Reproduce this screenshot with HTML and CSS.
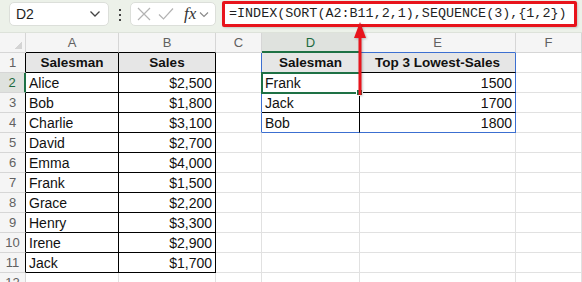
FILE: index.html
```html
<!DOCTYPE html>
<html lang="en">
<head>
  <meta charset="UTF-8" />
  <title>SORT with SEQUENCE</title>
  <link rel="stylesheet" href="styles.css">
</head>
<body>
  <div class="toolbar">
    <div class="namebox">
      <span>D2</span>
      <svg width="12" height="8" viewBox="0 0 12 8"><path d="M1.5 1.5 L6 6 L10.5 1.5" fill="none" stroke="#444" stroke-width="1.3"/></svg>
    </div>
    <div class="dots"><i></i><i></i><i></i></div>
    <div class="fxbox">
      <svg width="14" height="14" viewBox="0 0 14 14"><path d="M1 1 L13 13 M13 1 L1 13" stroke="#b3b3b3" stroke-width="1.2"/></svg>
      <svg width="16" height="14" viewBox="0 0 16 14"><path d="M1 7.5 L5.5 12 L15 1.5" fill="none" stroke="#b3b3b3" stroke-width="1.2"/></svg>
      <span class="fx">fx</span>
      <svg width="10" height="7" viewBox="0 0 10 7"><path d="M1 1.5 L5 5.5 L9 1.5" fill="none" stroke="#888" stroke-width="1.1"/></svg>
    </div>
    <div class="formula">=INDEX(SORT(A2:B11,2,1),SEQUENCE(3),{1,2})</div>
  </div>

  <div class="sheet">
    <!-- column headers -->
    <div class="c hd corner"></div>
    <div class="c hd frame-b">A</div>
    <div class="c hd frame-b">B</div>
    <div class="c hd">C</div>
    <div class="c hd sel-col">D</div>
    <div class="c hd blue-b">E</div>
    <div class="c hd">F</div>

    <!-- row 1 -->
    <div class="c rh frame-r">1</div>
    <div class="c box th">Salesman</div>
    <div class="c box th">Sales</div>
    <div class="c blue-r"></div>
    <div class="c box th">Salesman</div>
    <div class="c box th blue-r">Top 3 Lowest-Sales</div>
    <div class="c"></div>

    <!-- row 2 -->
    <div class="c rh frame-r sel-row">2</div>
    <div class="c box">Alice</div>
    <div class="c box num">$2,500</div>
    <div class="c blue-r"></div>
    <div class="c box active">Frank<span class="handle"></span></div>
    <div class="c box num blue-r">1500</div>
    <div class="c"></div>

    <!-- row 3 -->
    <div class="c rh frame-r">3</div>
    <div class="c box">Bob</div>
    <div class="c box num">$1,800</div>
    <div class="c blue-r"></div>
    <div class="c box">Jack</div>
    <div class="c box num blue-r">1700</div>
    <div class="c"></div>

    <!-- row 4 -->
    <div class="c rh frame-r">4</div>
    <div class="c box">Charlie</div>
    <div class="c box num">$3,100</div>
    <div class="c blue-r"></div>
    <div class="c box blue-b">Bob</div>
    <div class="c box num blue-r blue-b">1800</div>
    <div class="c"></div>

    <div class="c rh frame-r">5</div>
    <div class="c box">David</div>
    <div class="c box num">$2,700</div>
    <div class="c"></div><div class="c"></div><div class="c"></div><div class="c"></div>

    <div class="c rh frame-r">6</div>
    <div class="c box">Emma</div>
    <div class="c box num">$4,000</div>
    <div class="c"></div><div class="c"></div><div class="c"></div><div class="c"></div>

    <div class="c rh frame-r">7</div>
    <div class="c box">Frank</div>
    <div class="c box num">$1,500</div>
    <div class="c"></div><div class="c"></div><div class="c"></div><div class="c"></div>

    <div class="c rh frame-r">8</div>
    <div class="c box">Grace</div>
    <div class="c box num">$2,200</div>
    <div class="c"></div><div class="c"></div><div class="c"></div><div class="c"></div>

    <div class="c rh frame-r">9</div>
    <div class="c box">Henry</div>
    <div class="c box num">$3,300</div>
    <div class="c"></div><div class="c"></div><div class="c"></div><div class="c"></div>

    <div class="c rh frame-r">10</div>
    <div class="c box">Irene</div>
    <div class="c box num">$2,900</div>
    <div class="c"></div><div class="c"></div><div class="c"></div><div class="c"></div>

    <div class="c rh frame-r">11</div>
    <div class="c box">Jack</div>
    <div class="c box num">$1,700</div>
    <div class="c"></div><div class="c"></div><div class="c"></div><div class="c"></div>

    <div class="c rh">12</div>
    <div class="c"></div><div class="c"></div><div class="c"></div>
    <div class="c"></div><div class="c"></div><div class="c"></div>
  </div>

  <!-- callout arrow from the formula to the result -->
  <svg class="arrow" width="20" height="76" viewBox="0 0 20 76">
    <path d="M10 15 L10 73" stroke="#e8141c" stroke-width="3"/>
    <path d="M10 0 L16 16 L4 16 Z" fill="#e8141c"/>
  </svg>
</body>
</html>
```

FILE: styles.css
```css
body {
  margin: 0;
  width: 582px;
  height: 282px;
  overflow: hidden;
  background-color: #fff;
  font-family: "Liberation Sans", Arial, sans-serif;
  position: relative;
}
.toolbar {
  height: 33px;
  background-color: #ecf1e9;
  border-bottom: 1px solid #dde2da;
  display: flex;
  align-items: flex-start;
  box-sizing: border-box;
}
.namebox {
  margin: 2px 0 0 9px;
  width: 100px;
  height: 24px;
  box-sizing: border-box;
  background-color: #fff;
  border: 1px solid #dcdfda;
  border-radius: 5px;
  display: flex;
  align-items: center;
  justify-content: space-between;
  padding: 0 7px 0 6px;
  font-size: 14px;
  color: #1f1f1f;
}
.dots {
  width: 21px;
  padding-top: 9px;
  display: flex;
  flex-direction: column;
  align-items: center;
  gap: 3px;
}
.dots i {
  width: 2px;
  height: 2px;
  background-color: #444;
}
.fxbox {
  margin-top: 2px;
  width: 86px;
  height: 24px;
  box-sizing: border-box;
  background-color: #fff;
  border: 1px solid #dcdfda;
  border-radius: 5px;
  display: flex;
  align-items: center;
  padding: 0 5px 0 6px;
  gap: 7px;
}
.fx {
  font-family: "Liberation Serif", serif;
  font-style: italic;
  font-size: 17px;
  color: #333;
  margin-left: 3px;
  margin-right: -4px;
}
.formula {
  margin: 1px 0 0 6px;
  width: 355px;
  height: 26px;
  box-sizing: border-box;
  background-color: #fff;
  border: 3px solid #e8141c;
  border-radius: 2px;
  padding-left: 4px;
  font-family: "Liberation Mono", monospace;
  font-size: 13.4px;
  line-height: 20px;
  color: #1f1f1f;
  white-space: nowrap;
  box-shadow: 1px 1px 2px rgba(0,0,0,0.15);
}

/* grid */
.sheet {
  display: grid;
  grid-template-columns: 26px 93px 97px 46px 98px 156px 66px;
  grid-auto-rows: 20px;
}
.c {
  box-sizing: border-box;
  border-right: 1px solid #e1e1e1;
  border-bottom: 1px solid #e1e1e1;
  padding: 0 3px;
  font-size: 14px;
  line-height: 20px;
  color: #111;
  white-space: nowrap;
  overflow: hidden;
}
.hd, .rh {
  background-color: #f5f5f5;
  border-color: #d6d6d6;
  color: #616161;
  font-size: 13px;
  text-align: center;
  padding: 0;
}
.corner {
  background: linear-gradient(135deg, #f5f5f5 62%, #d4d4d4 62%);
  background-size: 10px 10px;
  background-repeat: no-repeat;
  background-position: right 3px bottom 3px;
  background-color: #f5f5f5;
}
.box {
  border-right-color: #000;
  border-bottom-color: #000;
}
.th {
  background-color: #e6e6e6;
  font-weight: bold;
  font-size: 13.5px;
  text-align: center;
}
.num {
  text-align: right;
}
.frame-r {
  border-right-color: #000;
}
.frame-b {
  border-bottom-color: #000;
}
.blue-r {
  border-right-color: #3c6fd0;
}
.blue-b {
  border-bottom-color: #3c6fd0;
}
.sel-col {
  background-color: #dfe2de;
  color: #1e6b41;
  border-bottom: 2px solid #1e7145;
}
.sel-row {
  background-color: #dfe2de;
  color: #1e6b41;
  border-right: 2px solid #1e7145;
}
.active {
  position: relative;
  overflow: visible;
  outline: 2px solid #1e7145;
  outline-offset: -1px;
  z-index: 1;
}
.handle {
  position: absolute;
  right: -4px;
  bottom: -4px;
  width: 5px;
  height: 5px;
  background-color: #1e7145;
  border: 1px solid #fff;
}
.arrow {
  position: absolute;
  left: 350px;
  top: 22px;
  z-index: 2;
  filter: drop-shadow(1px 1px 1px rgba(0,0,0,0.25));
}
```
